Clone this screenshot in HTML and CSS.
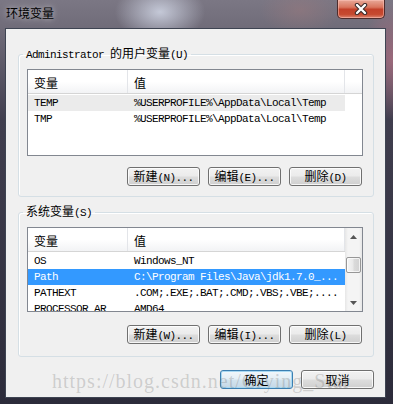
FILE: index.html
```html
<!DOCTYPE html>
<html lang="zh-CN">
<head>
    <meta charset="UTF-8">
    <meta name="viewport" content="width=device-width, initial-scale=1.0">
    <title>环境变量</title>

    <link rel="stylesheet" href="styles.css">
</head>
<body>

<div class="window">
    <div class="titlebar">
        <span class="title">环境变量</span>
        <button class="close-btn" title="关闭">
            <svg width="14" height="12" viewBox="0 0 14 12">
                <path d="M3 2 L11 10 M11 2 L3 10" stroke="#3a2a2a" stroke-width="4.4" stroke-linecap="round"/>
                <path d="M3 2 L11 10 M11 2 L3 10" stroke="#fff" stroke-width="2.4" stroke-linecap="round"/>
            </svg>
        </button>
    </div>

    <div class="client">
        <!-- 用户变量 -->
        <fieldset class="group">
            <legend><span class="mono">Administrator </span>的用户变量<span class="mono">(U)</span></legend>
            <div class="list">
                <div class="list-main">
                    <div class="list-head">
                        <div class="col-name">变量</div>
                        <div class="col-value">值</div>
                        <div class="col-rest"></div>
                    </div>
                    <div class="rows">
                        <div class="row dim"><span class="col-name mono">TEMP</span><span class="col-value mono">%USERPROFILE%\AppData\Local\Temp</span></div>
                        <div class="row"><span class="col-name mono">TMP</span><span class="col-value mono">%USERPROFILE%\AppData\Local\Temp</span></div>
                    </div>
                </div>
            </div>
            <div class="btn-row">
                <button class="btn">新建<span class="mono">(N)...</span></button>
                <button class="btn">编辑<span class="mono">(E)...</span></button>
                <button class="btn">删除<span class="mono">(D)</span></button>
            </div>
        </fieldset>

        <!-- 系统变量 -->
        <fieldset class="group sys-group">
            <legend>系统变量<span class="mono">(S)</span></legend>
            <div class="list sys-list">
                <div class="list-main">
                    <div class="list-head">
                        <div class="col-name">变量</div>
                        <div class="col-value">值</div>
                    </div>
                    <div class="rows">
                        <div class="row"><span class="col-name mono">OS</span><span class="col-value mono">Windows_NT</span></div>
                        <div class="row selected"><span class="col-name mono">Path</span><span class="col-value mono">C:\Program Files\Java\jdk1.7.0_...</span></div>
                        <div class="row"><span class="col-name mono">PATHEXT</span><span class="col-value mono">.COM;.EXE;.BAT;.CMD;.VBS;.VBE;....</span></div>
                        <div class="row"><span class="col-name mono">PROCESSOR_AR</span><span class="col-value mono">AMD64</span></div>
                    </div>
                </div>
                <div class="scrollbar">
                    <div class="scroll-arrow">
                        <svg width="7" height="4" viewBox="0 0 7 4"><path d="M3.5 0 L7 4 L0 4 Z" fill="#555"/></svg>
                    </div>
                    <div class="scroll-track"><div class="scroll-thumb"></div></div>
                    <div class="scroll-arrow">
                        <svg width="7" height="4" viewBox="0 0 7 4"><path d="M0 0 L7 0 L3.5 4 Z" fill="#555"/></svg>
                    </div>
                </div>
            </div>
            <div class="btn-row">
                <button class="btn">新建<span class="mono">(W)...</span></button>
                <button class="btn">编辑<span class="mono">(I)...</span></button>
                <button class="btn">删除<span class="mono">(L)</span></button>
            </div>
        </fieldset>

        <div class="btn-row dialog-btns">
            <button class="btn default-btn">确定</button>
            <button class="btn">取消</button>
        </div>
    </div>

    <div class="watermark">https://blog.csdn.net/Crying_Star</div>
</div>

</body>
</html>
```

FILE: styles.css
```css
body {
    margin: 0;
    width: 393px;
    height: 404px;
    overflow: hidden;
    font-family: "Noto Sans CJK SC", sans-serif;
    font-size: 12px;
    color: #000;
    background:
        radial-gradient(ellipse 45px 30px at 160px 12px, rgba(205, 210, 225, 0.9), transparent),
        radial-gradient(ellipse 30px 60px at 392px 60px, rgba(180, 110, 130, 0.7), transparent),
        radial-gradient(ellipse 40px 25px at 300px 10px, rgba(150, 120, 125, 0.6), transparent),
        linear-gradient(to bottom, #7b7784 0, #6f6b78 30px, #403e4e 120px, #2c2b3a 404px);
}
.window {
    position: relative;
    height: 404px;
}
.titlebar {
    height: 28px;
    box-sizing: border-box;
    display: flex;
    justify-content: space-between;
    align-items: flex-start;
    padding: 0 8px 0 6px;
}
.title {
    margin-top: 5px;
    line-height: 16px;
    text-shadow: 0 0 6px rgba(255, 255, 255, 0.7);
}
.close-btn {
    width: 48px;
    height: 19px;
    padding: 0;
    display: flex;
    align-items: center;
    justify-content: center;
    border: 1px solid #4e2c2c;
    border-top: none;
    border-radius: 0 0 5px 5px;
    background: linear-gradient(#e8a898 0%, #d9755e 40%, #c3412a 52%, #c64a30 80%, #db8570 100%);
    box-shadow: inset 0 0 0 1px rgba(255, 200, 190, 0.5);
}
.client {
    margin: 0 7px 0 5px;
    height: 370px;
    box-sizing: border-box;
    border: 1px solid #3e4452;
    background: #f0f0f0;
    display: flex;
    flex-direction: column;
}
.mono {
    font-family: "Liberation Mono", monospace;
    font-size: 11px;
    letter-spacing: -0.6px;
}
.group {
    margin: 17px 11px 0 12px;
    padding: 7px 10px 10px 8px;
    border: 1px solid #d5dfe5;
    border-radius: 3px;
    min-width: 0;
    box-shadow: inset 1px 1px 0 #fff;
}
.group legend {
    margin-left: -4px;
    padding: 0 3px;
    line-height: 14px;
}
.sys-group {
    margin-top: 7px;
    padding-bottom: 12px;
}
.list {
    height: 87px;
    box-sizing: border-box;
    border: 1px solid #828790;
    background: #fff;
    display: flex;
    overflow: hidden;
}
.sys-list {
    height: 85px;
}
.list-main {
    flex: 1;
    min-width: 0;
}
.list-head {
    display: flex;
    height: 24px;
    box-sizing: border-box;
    border-bottom: 1px solid #d5d5d5;
    background: linear-gradient(#fff, #fff 50%, #f2f3f5);
}
.list-head > div {
    box-sizing: border-box;
    border-right: 1px solid #e3e5e9;
    padding: 2px 0 0 6px;
    line-height: 21px;
}
.list-head .col-rest {
    flex: 1;
    border-right: none;
}
.col-name {
    width: 100px;
    flex-shrink: 0;
}
.list-head .col-value {
    width: 217px;
}
.rows {
    padding-top: 1px;
}
.row {
    display: flex;
    width: 317px;
    height: 16px;
    line-height: 16px;
    white-space: nowrap;
}
.row .col-name,
.row .col-value {
    box-sizing: border-box;
    padding-left: 6px;
}
.row.dim {
    background: #ebebeb;
}
.row.selected {
    background: #3399ff;
    color: #fff;
}
.scrollbar {
    width: 17px;
    display: flex;
    flex-direction: column;
    background: linear-gradient(to right, #e6e6e6, #f4f4f4 3px, #f4f4f4 14px, #e6e6e6);
}
.scroll-arrow {
    height: 17px;
    display: flex;
    align-items: center;
    justify-content: center;
}
.scroll-track {
    flex: 1;
}
.scroll-thumb {
    margin: 12px 1px 0 1px;
    height: 16px;
    box-sizing: border-box;
    border: 1px solid #979797;
    border-radius: 2px;
    background: linear-gradient(to right, #f6f6f6, #e9e9e9 45%, #dadada 55%, #d2d2d2);
    box-shadow: inset 0 0 0 1px rgba(255, 255, 255, 0.7);
}
.btn-row {
    display: flex;
    justify-content: flex-end;
    gap: 8px;
    margin-top: 11px;
    padding-right: 1px;
}
.sys-group .btn-row {
    margin-top: 13px;
}
.btn {
    width: 73px;
    height: 19px;
    box-sizing: border-box;
    padding: 0;
    border: 1px solid #707070;
    border-radius: 3px;
    background: linear-gradient(#f2f2f2, #ebebeb 48%, #dddddd 52%, #cfcfcf);
    box-shadow: inset 0 0 0 1px rgba(255, 255, 255, 0.8);
    font-family: inherit;
    font-size: 12px;
    line-height: 16px;
    color: #000;
}
.default-btn {
    border-color: #3c7fb1;
    background: linear-gradient(#f1f7fb, #e3eef5 48%, #d3e3ee 52%, #c5d8e6);
    box-shadow: inset 0 0 0 1px #a8d8f2;
}
.dialog-btns {
    margin: 13px 11px 0 0;
    padding-right: 0;
}
.watermark {
    position: absolute;
    left: 52px;
    top: 370px;
    font-family: "Liberation Serif", serif;
    font-size: 20px;
    letter-spacing: 1px;
    color: rgba(120, 120, 120, 0.3);
    white-space: nowrap;
    pointer-events: none;
}
```
